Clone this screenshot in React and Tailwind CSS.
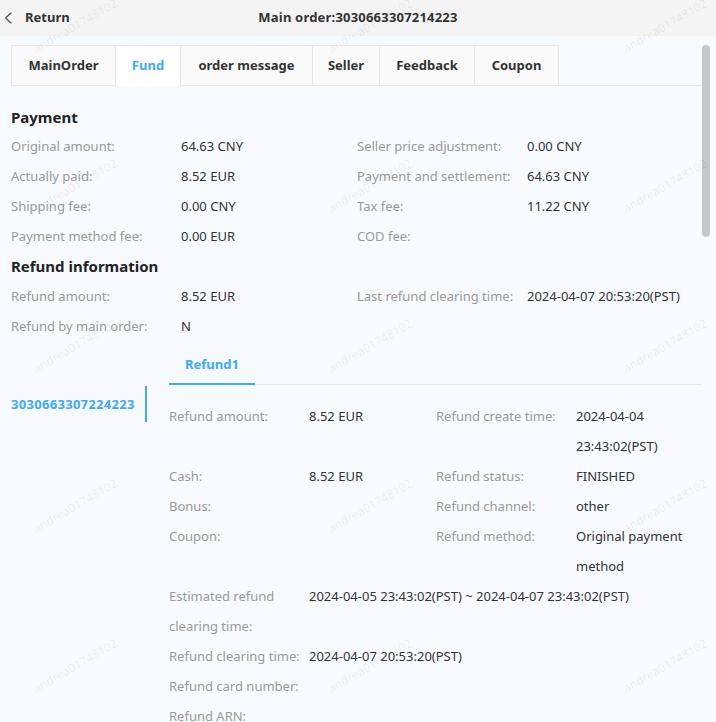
import React from 'react';

const tabs = [
  { label: 'MainOrder', w: 'w-[105px]' },
  { label: 'Fund', w: 'w-[66px]' },
  { label: 'order message', w: 'w-[133px]' },
  { label: 'Seller', w: 'w-[68px]' },
  { label: 'Feedback', w: 'w-[96px]' },
  { label: 'Coupon', w: 'w-[85px]' },
];

const paymentRows = [
  ['Original amount:', '64.63 CNY', 'Seller price adjustment:', '0.00 CNY'],
  ['Actually paid:', '8.52 EUR', 'Payment and settlement:', '64.63 CNY'],
  ['Shipping fee:', '0.00 CNY', 'Tax fee:', '11.22 CNY'],
  ['Payment method fee:', '0.00 EUR', 'COD fee:', ''],
];

const refundInfoRows = [
  ['Refund amount:', '8.52 EUR', 'Last refund clearing time:', '2024-04-07 20:53:20(PST)'],
  ['Refund by main order:', 'N', '', ''],
];

const refundDetailRows = [
  ['Refund amount:', '8.52 EUR', 'Refund create time:', '2024-04-04 23:43:02(PST)'],
  ['Cash:', '8.52 EUR', 'Refund status:', 'FINISHED'],
  ['Bonus:', '', 'Refund channel:', 'other'],
  ['Coupon:', '', 'Refund method:', 'Original payment method'],
];

const refundWideRows = [
  ['Estimated refund clearing time:', '2024-04-05 23:43:02(PST) ~ 2024-04-07 23:43:02(PST)'],
  ['Refund clearing time:', '2024-04-07 20:53:20(PST)'],
  ['Refund card number:', ''],
  ['Refund ARN:', ''],
];

const InfoGrid = ({ rows }) => (
  <div className="grid grid-cols-[170px_176px_170px_1fr] text-[13px] leading-[30px]">
    {rows.map((r, i) => (
      <React.Fragment key={i}>
        <div className="text-[#9a9a9a]">{r[0]}</div>
        <div className="text-[#333]">{r[1]}</div>
        <div className="text-[#9a9a9a]">{r[2]}</div>
        <div className="text-[#333]">{r[3]}</div>
      </React.Fragment>
    ))}
  </div>
);

const Watermarks = () => (
  <div className="pointer-events-none absolute left-[-72px] top-[-54px] grid grid-cols-[repeat(3,295px)] auto-rows-[160px]">
    {Array.from({ length: 15 }).map((_, i) => (
      <div key={i} className="flex items-center justify-center">
        <span className="-rotate-30 text-[12px] text-black/[0.07]">andrea01748102</span>
      </div>
    ))}
  </div>
);

export default function App() {
  return (
    <div
      className="relative h-[722px] w-full overflow-hidden bg-[#f7faff]"
      style={{ fontFamily: '"Noto Sans", "Open Sans", sans-serif' }}
    >
      {/* top bar */}
      <div className="relative flex h-[36px] items-center bg-[#f4f4f4]">
        <button className="flex items-center pl-[3px] text-[13px] font-bold text-[#333]">
          <svg width="10" height="14" viewBox="0 0 10 14" fill="none">
            <path d="M8 2 L2.5 7 L8 12" stroke="#555" strokeWidth="1.3" strokeLinecap="round" strokeLinejoin="round" />
          </svg>
          <span className="ml-[12px]">Return</span>
        </button>
        <div className="absolute inset-x-0 text-center text-[13px] font-bold tracking-[0.2px] text-[#333]">
          Main order:3030663307214223
        </div>
      </div>

      <div className="pl-[11px] pr-[14px] pt-[9px]">
        {/* tabs */}
        <div className="flex h-[41px] border-b border-[#e8e8e8]">
          {tabs.map((t) => (
            <div
              key={t.label}
              className={`-mb-px flex items-center justify-center border border-[#e8e8e8] text-[13px] font-bold ${t.w} ${
                t.label === 'Fund'
                  ? 'border-b-white bg-white text-[#40a9ff]'
                  : 'bg-[#fafafa] text-[#333]'
              } -ml-px first:ml-0`}
            >
              {t.label}
            </div>
          ))}
        </div>

        {/* payment */}
        <div className="mt-[16px] text-[15px] font-bold leading-[30px] text-[#222]">Payment</div>
        <div className="-mt-px">
          <InfoGrid rows={paymentRows} />
        </div>

        <div className="text-[15px] font-bold leading-[30px] text-[#222]">Refund information</div>
        <InfoGrid rows={refundInfoRows} />

        {/* refund records */}
        <div className="mt-[4px] flex">
          <div className="w-[136px] shrink-0 pt-[41px]">
            <div className="flex h-[36px] items-center border-r-[2px] border-[#40a9ff] pt-px text-[13px] font-bold tracking-[0.3px] text-[#40a9ff]">
              3030663307224223
            </div>
          </div>
          <div className="ml-[22px] flex-1">
            <div className="flex h-[40px] border-b border-[#e6e8eb]">
              <div className="-mb-px flex items-center border-b-2 border-[#40a9ff] px-[16px] pt-[2px] text-[13px] font-bold text-[#40a9ff]">
                Refund1
              </div>
            </div>
            <div className="mt-[16px] grid grid-cols-[140px_127px_140px_1fr] text-[13px] leading-[30px]">
              {refundDetailRows.map((r, i) => (
                <React.Fragment key={i}>
                  <div className="text-[#9a9a9a]">{r[0]}</div>
                  <div className="text-[#333]">{r[1]}</div>
                  <div className="text-[#9a9a9a]">{r[2]}</div>
                  <div className="text-[#333]">{r[3]}</div>
                </React.Fragment>
              ))}
              {refundWideRows.map((r, i) => (
                <React.Fragment key={i}>
                  <div className="text-[#9a9a9a]">{r[0]}</div>
                  <div className="col-span-3 text-[#333]">{r[1]}</div>
                </React.Fragment>
              ))}
            </div>
          </div>
        </div>
      </div>

      {/* scrollbar thumb */}
      <div className="absolute right-[6px] top-[45px] h-[192px] w-[8px] rounded-full bg-[#c4c7cb]" />

      <Watermarks />
    </div>
  );
}
